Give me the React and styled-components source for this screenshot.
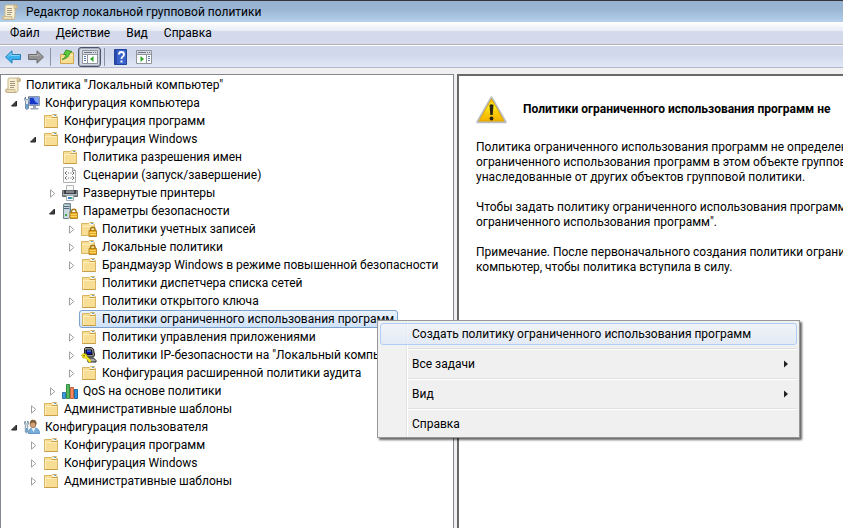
import styled, { createGlobalStyle, css } from 'styled-components';

const GlobalStyle = createGlobalStyle`
  * {
    box-sizing: border-box;
  }

  html,
  body,
  #root {
    height: 100%;
    margin: 0;
  }

  body,
  button {
    font-family: Roboto, 'Noto Sans', sans-serif;
    font-size: 12px;
    color: #000;
  }
`;

const Window = styled.div`
  display: flex;
  flex-direction: column;
  height: 100%;
  overflow: hidden;
  background: #f0f0f0;
`;

const TitleBar = styled.header`
  display: flex;
  align-items: center;
  gap: 8px;
  flex: none;
  height: 22px;
  padding: 0 2px;
  border-top: 1px solid #35353a;
  background: linear-gradient(#98b2d2, #9ab6d4 40%, #b6d0ea);
`;

const Title = styled.h1`
  margin: 0;
  font-size: 12px;
  font-weight: 400;
`;

const MenuBar = styled.nav`
  display: flex;
  flex: none;
  height: 23px;
  padding: 0 2px;
  border-bottom: 1px solid #b0b0ae;
  background: linear-gradient(#fff 0, #e6ebf5 9px, #d4daec 9px, #d4daec 100%);
`;

const MenuBarButton = styled.button`
  padding: 0 8px;
  border: 0;
  background: none;
`;

const ToolBar = styled.div`
  display: flex;
  align-items: center;
  flex: none;
  height: 23px;
  padding: 0 1px;
  border-top: 1px solid #fff;
  border-bottom: 1px solid #b0b8ca;
  background: linear-gradient(#d2d8ec 40%, #e0e7f6);
`;

const ToolButton = styled.button`
  display: grid;
  place-items: center;
  width: 23px;
  height: 20px;
  padding: 0;
  border: 1px solid transparent;
  border-radius: 3px;
  background: none;

  ${({ $pressed }) =>
    $pressed &&
    css`
      border-color: #4e5568;
      background: #d3d7e3;
      box-shadow: inset 0 0 0 1px #a4abbd;
    `}
`;

const ToolSeparator = styled.span`
  width: 1px;
  height: 18px;
  margin: 0 4px 0 3px;
  background: #8d93a3;
`;

const Panes = styled.main`
  display: grid;
  grid-template-columns: 454px minmax(0, 1fr);
  gap: 3px;
  flex: 1;
  min-height: 0;
  padding-top: 6px;
`;

const TreePane = styled.section`
  overflow: hidden;
  padding: 1px 0;
  border: 1px solid #828790;
  border-bottom: 0;
  background: #fff;
`;

const TreeList = styled.ul`
  margin: 0;
  padding: 0;
  list-style: none;
`;

const Row = styled.div`
  display: flex;
  align-items: center;
  height: 18px;
  padding-left: ${({ $level }) => ($level ? $level * 19 - 17 : 2)}px;
`;

const Expander = styled.button`
  display: grid;
  place-items: center;
  flex: none;
  width: 19px;
  height: 18px;
  padding: 1px 0 0 4px;
  border: 0;
  background: none;
`;

const NodeLabel = styled.span`
  display: flex;
  align-items: center;
  gap: 5px;
  height: 18px;
  padding: 0 3px 0 1px;
  border: 1px solid ${({ $selected }) => ($selected ? '#7da2ce' : 'transparent')};
  border-radius: 3px;
  background: ${({ $selected }) => ($selected ? 'linear-gradient(#eaf2fd, #cfe2fb)' : 'none')};
  white-space: nowrap;
`;

const Icon = styled.svg`
  display: block;
  flex: none;
  width: ${({ $size = 16 }) => $size}px;
  height: ${({ $size = 16 }) => $size}px;
`;

const DetailPane = styled.section`
  overflow: hidden;
  padding: 16px 0 0 17px;
  border: 2px solid #696969;
  border-right: 0;
  border-bottom: 0;
  background: #fff;
  white-space: nowrap;
`;

const DetailHeader = styled.div`
  display: flex;
  align-items: center;
  gap: 15px;
  height: 34px;
`;

const DetailTitle = styled.h2`
  margin: 0;
  font-size: 12px;
  font-weight: 700;
`;

const DetailBody = styled.div`
  display: flex;
  flex-direction: column;
  gap: 15px;
  padding-top: 14px;
  line-height: 15px;
`;

const Paragraph = styled.p`
  margin: 0;
`;

const ContextMenu = styled.div`
  position: absolute;
  top: 320px;
  left: 377px;
  width: 423px;
  padding: 2px;
  border: 1px solid #979797;
  background: linear-gradient(90deg, #f1f1f1 28px, #e2e3e3 28px, #e2e3e3 29px, #fff 29px, #fff 30px, #f0f0f0 30px);
  box-shadow: 2px 2px 2px rgba(0, 0, 0, 0.6);
`;

const ContextItem = styled.button`
  display: flex;
  align-items: center;
  justify-content: space-between;
  width: 100%;
  height: 22px;
  padding: 0 6px 0 31px;
  border: 1px solid ${({ $active }) => ($active ? '#aecff7' : 'transparent')};
  border-radius: 3px;
  background: ${({ $active }) => ($active ? 'linear-gradient(rgba(240, 243, 248, 0.8), rgba(224, 233, 246, 0.8))' : 'none')};
  text-align: left;
`;

const ContextSeparator = styled.hr`
  height: 2px;
  margin: 3px 0 3px 28px;
  border: 0;
  border-top: 1px solid #e0e0e0;
  background: #fff;
`;

const FolderIcon = () => (
  <Icon viewBox="0 0 16 16">
    <path d="M1.500 2.500h7l1-1h4v2h1v11h-13z" fill="#f8dd94" stroke="#d9b566" />
    <path d="M9.500 2h4v2h-4z" fill="#fffbe8" />
    <path d="M11 2h2v1h-2z" fill="#5ba0dd" />
    <path d="M8.500 4.500h5.500" stroke="#c79d45" />
    <path d="M2 5h12v1H2z" fill="#fdeebb" />
    <path d="M2.500 6v8" stroke="#fdeebb" />
    <path d="M1.500 14.500h13" stroke="#c79d45" />
  </Icon>
);

const Lock = () => (
  <>
    <path d="M9.500 10V8.500a2.300 2.300 0 0 1 4.600 0V10" fill="none" stroke="#a87a17" strokeWidth="1.400" />
    <path d="M8 9.500h7.500v6H8z" fill="#e5a91d" stroke="#a87412" strokeWidth=".8" />
    <path d="M8.500 11.500h6.500M8.500 13.500h6.500" stroke="#ffe07a" strokeWidth=".8" />
  </>
);

const LockedFolderIcon = () => (
  <Icon viewBox="0 0 16 16">
    <path d="M.5 2.500h7l1-1h4v2h1v11H.5z" fill="#f8dd94" stroke="#d9b566" />
    <path d="M8.500 2h4v2h-4z" fill="#fffbe8" />
    <path d="M10 2h2v1h-2z" fill="#5ba0dd" />
    <path d="M1 5h12v1H1z" fill="#fdeebb" />
    <Lock />
  </Icon>
);

const ServerIcon = () => (
  <Icon viewBox="0 0 16 16">
    <path d="M1.500 1.500l1-1h6v13l-2 2h-5z" fill="#9fb4bd" stroke="#71858f" />
    <path d="M2 2h5v13H2z" fill="#c9d8dd" />
    <path d="M2 3.500h5M2 5.500h5" stroke="#4f6a78" />
    <path d="M3 11h2v2H3z" fill="#4ba64d" />
    <Lock />
  </Icon>
);

const ScrollIcon = () => (
  <Icon viewBox="0 0 16 16">
    <path d="M4 1h9.500q2 0 2 2t-1.500 1.500h-1V13q0 2.500-2.500 2.500H2.500Q.5 15.500.5 13.500T2.500 12H3V3q0-2 1-2z" fill="#f8efd2" stroke="#c6b68d" />
    <path d="M12 4.500V3q0-2 1.500-2t1.500 2-1 1.500z" fill="#ddcba0" stroke="#b39e70" strokeWidth=".6" />
    <path d="M2.500 12.500h7.500q-.5 2.500 1 3H2.500q-1.500 0-1.500-1.500t1.500-1.500z" fill="#e9dcb8" stroke="#b39e70" strokeWidth=".6" />
    <path d="M5 4.500h5M5 6.500h5M5 8.500h5M5 10.500h4" stroke="#a3987d" />
  </Icon>
);

const ComputerIcon = () => (
  <Icon viewBox="0 0 16 16">
    <path d="M4.500 1.500h11v9h-11z" fill="#d9dee6" stroke="#8b97a8" />
    <path d="M5.500 2.500h9v7h-9z" fill="#1738c4" />
    <path d="M9.500 2.500h5v6q-4-1-5-6z" fill="#7ba2f5" />
    <path d="M9 11h3v2h2.500v1.500h-8V13H9z" fill="#9da7b3" />
    <path d="M1.500 2v2l1.500 1 1.500-1V2q2 2 0 4.500v7q-1.500 2-3 0v-7q-2-2.500 0-4.500z" fill="#dfe9f1" stroke="#587389" strokeWidth=".8" />
    <path d="M2 9h2v5H2z" fill="#6ba1cf" />
  </Icon>
);

const UserIcon = () => (
  <Icon viewBox="0 0 16 16">
    <path d="M4.500 14.500Q4 10 8 9h3q4.500.5 4.500 5.500z" fill="#79aedb" stroke="#4c87ba" strokeWidth=".8" />
    <path d="M7.500 9l2 4 2-4z" fill="#eef6fc" />
    <ellipse cx="9" cy="5" rx="3" ry="3.800" fill="#d3a077" stroke="#94704c" strokeWidth=".7" />
    <path d="M6 6Q5.500.8 9 .8q3.500 0 3.500 3.700l-.7 2Q11 3 9 3.500 6.500 3.500 6 6z" fill="#80603c" />
    <path d="M1.300 2v2l1.200 1 1.200-1V2q1.800 2 0 4v7q-1.200 2-2.400 0V6q-1.800-2 0-4z" fill="#e5edf3" stroke="#587389" strokeWidth=".7" />
    <path d="M1.700 9h1.600v4.500H1.700z" fill="#6ba1cf" />
  </Icon>
);

const ScriptIcon = () => (
  <Icon viewBox="0 0 16 16">
    <path d="M1.500.5h9l3 3v12h-12z" fill="#fbfbfb" stroke="#b0b0b0" />
    <path d="M10.500.5v3h3" fill="#ddd" stroke="#a0a0a0" />
    <path d="M5 4.500h-.5L3 6l1.500 1.500H5M10 4.500h.5L12 6l-1.500 1.500H10M6 6h1M8.500 6h1M5 9.500h-.5L3 11l1.500 1.500H5M10 9.500h.5L12 11l-1.500 1.500H10M6 11h1M8.500 11h1" fill="none" stroke="#555" strokeWidth=".9" />
  </Icon>
);

const PrinterIcon = () => (
  <Icon viewBox="0 0 16 16">
    <path d="M4.500.5h7v5h-7z" fill="#fafafa" stroke="#b5b5b5" />
    <path d="M.5 5.500h15v6H.5z" fill="#858a90" stroke="#666b72" />
    <path d="M2 5h2v3h8V5h2v4H2z" fill="#3d4146" />
    <path d="M1 9.500h14" stroke="#b9bec4" />
    <path d="M4.500 10.500h7v5h-7z" fill="#f5fafc" stroke="#9fabb5" />
    <path d="M6 12h3v2H6z" fill="#3585c6" />
    <path d="M9 12h1.500v2H9z" fill="#55b47a" />
  </Icon>
);

const IpSecurityIcon = () => (
  <Icon viewBox="0 0 16 16">
    <path d="M3.500 1.500l1-1h6l2 1.500 1 6-1 2h-7l-2-1z" fill="#8f8f8f" stroke="#222" />
    <path d="M5 3h5.500l.7 4.500H5z" fill="#0a12a8" stroke="#111" />
    <path d="M6 4h4" stroke="#5aa0ff" />
    <path d="M6.500 11h6l2.500 2.500V15H7z" fill="#aaa" stroke="#222" />
    <path d="M.5 8L2.500 6.500l3 .8.500 2.200 4 3.700v2H8L4.800 11.200 2 11z" fill="#ffee26" stroke="#a59400" strokeWidth=".6" />
    <circle cx="3" cy="8.700" r=".8" fill="#504800" />
  </Icon>
);

const QosIcon = () => (
  <Icon viewBox="0 0 16 16">
    <path d="M.5 9.500h3v6h-3z" fill="#3d9ee0" stroke="#145e9c" strokeWidth=".8" />
    <path d="M4.500 1.500h3v14h-3z" fill="#53b95a" stroke="#1d7a2c" strokeWidth=".8" />
    <path d="M8.500 4.500h3v11h-3z" fill="#f48a5d" stroke="#b84a22" strokeWidth=".8" />
    <path d="M12.500 6.500h3v9h-3z" fill="#2694dc" stroke="#0d4c86" strokeWidth=".8" />
  </Icon>
);

const WarningIcon = () => (
  <Icon viewBox="0 0 32 32" $size={32}>
    <defs>
      <linearGradient id="warning" x2="0" y2="1">
        <stop offset="0" stopColor="#f5b800" />
        <stop offset=".35" stopColor="#fff22a" />
        <stop offset=".6" stopColor="#fbcd08" />
        <stop offset="1" stopColor="#f3b200" />
      </linearGradient>
    </defs>
    <path d="M15.500 4.500L29.500 29h-28z" fill="#c9cdd0" stroke="#b9bdc0" strokeWidth="2.500" strokeLinejoin="round" />
    <path d="M15.500 6L28 28H3z" fill="url(#warning)" stroke="#e2a800" strokeLinejoin="round" />
    <path d="M13.500 12q2-1.500 4 0L16.700 22h-2.400z" fill="#2a2412" />
    <circle cx="15.500" cy="25.500" r="1.900" fill="#2a2412" />
  </Icon>
);

const ArrowIcon = ({ forward }) => (
  <Icon viewBox="0 0 16 16">
    <path
      d={forward ? 'M15.500 8L9 1.800v3.700H.5v5H9v3.700z' : 'M.5 8L7 1.800v3.700h8.500v5H7v3.700z'}
      fill={forward ? '#929292' : '#3bb0ee'}
      stroke={forward ? '#6a6a6a' : '#2a80b8'}
      strokeLinejoin="round"
    />
    <path d={forward ? 'M1.500 6.500H10V4.500L13 7.500' : 'M3 7.500L6 4.500V6.500h8.500'} fill="none" stroke={forward ? '#b5b5b5' : '#83d5f8'} />
  </Icon>
);

const UpFolderIcon = () => (
  <Icon viewBox="0 0 16 16">
    <path d="M1.500 5.500h7l1-2h5v11h-13z" fill="#f8dd94" stroke="#cfa54f" />
    <path d="M9 6.500h5" stroke="#fff0bd" />
    <path d="M3 10.500q3.500-1 4-5L4.500 5.500 7 1l6 1.500-2.200 1.700Q9.500 9.500 3 10.500z" fill="#5fc83c" stroke="#2c8c1c" strokeWidth=".8" />
  </Icon>
);

// Console window with a side panel; the arrow tells whether the panel opens or closes
const PanelIcon = ({ right }) => (
  <Icon viewBox="0 0 16 16">
    <path d="M.5 1.500h15v13H.5z" fill="#fff" stroke="#8f949f" />
    <path d="M1 2h14v3H1z" fill="#d5d8df" />
    <path d="M2 3.500h8M11 3.500h1M13 3.500h1" stroke="#707788" />
    <path d="M1 5.500h14" stroke="#8f949f" />
    {right ? (
      <>
        <path d="M10.500 6v8" stroke="#8f949f" />
        <path d="M12 7.500h2M12 9.500h2M12 11.500h2" stroke="#5878b0" />
        <path d="M4.500 7v6l3.500-3z" fill="#2ca528" />
      </>
    ) : (
      <>
        <path d="M5.500 6v8" stroke="#8f949f" />
        <path d="M2 7.500h2M2 9.500h2M2 11.500h2" stroke="#5878b0" />
        <path d="M11.500 7v6L8 10z" fill="#2ca528" />
      </>
    )}
  </Icon>
);

const HelpIcon = () => (
  <Icon viewBox="0 0 16 16">
    <path d="M1.500.5h12v15h-12z" fill="#3a63cc" stroke="#24439b" />
    <path d="M2 1h2v14H2z" fill="#2c4aac" />
    <path d="M6 5.500Q6 3 8.500 3T11 5.500Q11 7 9.500 7.800 8.500 8.300 8.500 10" fill="none" stroke="#fff" strokeWidth="1.800" />
    <path d="M7.500 11.500h2v2h-2z" fill="#fff" />
  </Icon>
);

const ExpanderIcon = ({ open }) => (
  <Icon viewBox="0 0 9 9" $size={9}>
    {open ? <path d="M6.500 2v5h-5z" fill="#404040" stroke="#262626" /> : <path d="M2.500.8v7.400L6.800 4.500z" fill="#fff" stroke="#a0a0a0" />}
  </Icon>
);

const SubmenuIcon = () => (
  <Icon viewBox="0 0 8 8" $size={8}>
    <path d="M2 .5v7L6 4z" fill="#222" />
  </Icon>
);

const tree = [
  {
    title: 'Политика "Локальный компьютер"',
    icon: ScrollIcon,
    children: [
      {
        title: 'Конфигурация компьютера',
        icon: ComputerIcon,
        children: [
          { title: 'Конфигурация программ' },
          {
            title: 'Конфигурация Windows',
            children: [
              { title: 'Политика разрешения имен' },
              { title: 'Сценарии (запуск/завершение)', icon: ScriptIcon },
              { title: 'Развернутые принтеры', icon: PrinterIcon, closed: true },
              {
                title: 'Параметры безопасности',
                icon: ServerIcon,
                children: [
                  { title: 'Политики учетных записей', icon: LockedFolderIcon, closed: true },
                  { title: 'Локальные политики', icon: LockedFolderIcon, closed: true },
                  { title: 'Брандмауэр Windows в режиме повышенной безопасности', closed: true },
                  { title: 'Политики диспетчера списка сетей' },
                  { title: 'Политики открытого ключа', closed: true },
                  { title: 'Политики ограниченного использования программ', selected: true },
                  { title: 'Политики управления приложениями', closed: true },
                  { title: 'Политики IP-безопасности на "Локальный компьютер"', icon: IpSecurityIcon, closed: true },
                  { title: 'Конфигурация расширенной политики аудита', closed: true },
                ],
              },
              { title: 'QoS на основе политики', icon: QosIcon, closed: true },
            ],
          },
          { title: 'Административные шаблоны', closed: true },
        ],
      },
      {
        title: 'Конфигурация пользователя',
        icon: UserIcon,
        children: [
          { title: 'Конфигурация программ', closed: true },
          { title: 'Конфигурация Windows', closed: true },
          { title: 'Административные шаблоны', closed: true },
        ],
      },
    ],
  },
];

const menuItems = ['Файл', 'Действие', 'Вид', 'Справка'];

function TreeNode({ node, level }) {
  const NodeIcon = node.icon || FolderIcon;
  const open = Boolean(node.children);

  return (
    <li role="treeitem" aria-selected={Boolean(node.selected)}>
      <Row $level={level}>
        {level > 0 && (
          <Expander aria-label={node.title} disabled={!open && !node.closed}>
            {(open || node.closed) && <ExpanderIcon open={open} />}
          </Expander>
        )}
        <NodeLabel $selected={node.selected}>
          <NodeIcon />
          {node.title}
        </NodeLabel>
      </Row>
      {open && (
        <TreeList role="group">
          {node.children.map((child) => (
            <TreeNode key={child.title} node={child} level={level + 1} />
          ))}
        </TreeList>
      )}
    </li>
  );
}

function App() {
  return (
    <Window>
      <GlobalStyle />
      <TitleBar>
        <ScrollIcon />
        <Title>Редактор локальной групповой политики</Title>
      </TitleBar>
      <MenuBar>
        {menuItems.map((item) => (
          <MenuBarButton key={item}>{item}</MenuBarButton>
        ))}
      </MenuBar>
      <ToolBar>
        <ToolButton aria-label="Назад">
          <ArrowIcon />
        </ToolButton>
        <ToolButton aria-label="Вперед">
          <ArrowIcon forward />
        </ToolButton>
        <ToolSeparator />
        <ToolButton aria-label="Вверх">
          <UpFolderIcon />
        </ToolButton>
        <ToolButton aria-label="Дерево консоли" $pressed>
          <PanelIcon />
        </ToolButton>
        <ToolSeparator />
        <ToolButton aria-label="Справка">
          <HelpIcon />
        </ToolButton>
        <ToolButton aria-label="Панель действий">
          <PanelIcon right />
        </ToolButton>
      </ToolBar>
      <Panes>
        <TreePane>
          <TreeList role="tree">
            {tree.map((node) => (
              <TreeNode key={node.title} node={node} level={0} />
            ))}
          </TreeList>
        </TreePane>
        <DetailPane>
          <DetailHeader>
            <WarningIcon />
            <DetailTitle>Политики ограниченного использования программ не</DetailTitle>
          </DetailHeader>
          <DetailBody>
            <Paragraph>
              Политика ограниченного использования программ не определен
              <br />
              ограниченного использования программ в этом объекте группово
              <br />
              унаследованные от других объектов групповой политики.
            </Paragraph>
            <Paragraph>
              Чтобы задать политику ограниченного использования программ,
              <br />
              ограниченного использования программ".
            </Paragraph>
            <Paragraph>
              Примечание. После первоначального создания политики огранич
              <br />
              компьютер, чтобы политика вступила в силу.
            </Paragraph>
          </DetailBody>
        </DetailPane>
      </Panes>
      <ContextMenu role="menu">
        <ContextItem role="menuitem" $active>
          Создать политику ограниченного использования программ
        </ContextItem>
        <ContextSeparator />
        <ContextItem role="menuitem">
          Все задачи
          <SubmenuIcon />
        </ContextItem>
        <ContextSeparator />
        <ContextItem role="menuitem">
          Вид
          <SubmenuIcon />
        </ContextItem>
        <ContextSeparator />
        <ContextItem role="menuitem">Справка</ContextItem>
      </ContextMenu>
    </Window>
  );
}

export default App;
